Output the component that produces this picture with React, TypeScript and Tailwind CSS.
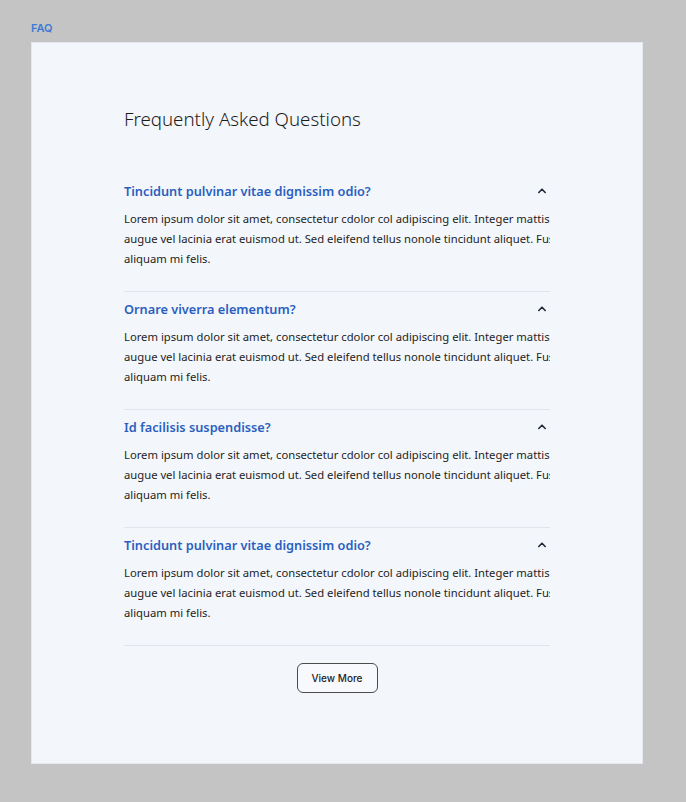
import React from "react";

const items = [
  "Tincidunt pulvinar vitae dignissim odio?",
  "Ornare viverra elementum?",
  "Id facilisis suspendisse?",
  "Tincidunt pulvinar vitae dignissim odio?",
];

function Chevron() {
  return (
    <svg width="10" height="10" viewBox="0 0 10 10" fill="none">
      <path d="M1.8 6.5 L5 3.2 L8.2 6.5" stroke="#1f2937" strokeWidth="1.6" strokeLinecap="round" strokeLinejoin="round" />
    </svg>
  );
}

export default function App() {
  return (
    <div className="min-h-screen w-full bg-[#c4c4c4] pt-[20px] pl-[31px]" style={{ minHeight: 802 }}>
      <div className="h-[22px] text-[11px] leading-[16px] font-semibold text-[#3c7bd6]" style={{ fontFamily: "Inter, 'Noto Sans', sans-serif" }}>
        FAQ
      </div>
      <div
        className="w-[612px] h-[722px] bg-[#f3f6fb] border border-[#e3e7ee] px-[92px] pt-[62px]"
        style={{ fontFamily: "'Noto Sans', sans-serif" }}
      >
        <h1 className="text-[18.7px] leading-[28px] font-light text-[#1c1c1c]">Frequently Asked Questions</h1>
        <div className="mt-[48px] flex flex-col">
          {items.map((q, i) => (
            <div key={i} className={`border-b border-[#e2e6ec] pb-[22px] ${i === 0 ? "" : "pt-[7px]"}`}>
              <div className="flex items-center justify-between h-[20px]">
                <span className="text-[12.75px] leading-[20px] font-semibold text-[#2a5fbf]">{q}</span>
                <span className="mr-[3px] flex items-center"><Chevron /></span>
              </div>
              <div className="mt-[8px] overflow-hidden text-[11.25px] leading-[20px] text-[#1e1e1e]">
                <div className="whitespace-nowrap">Lorem ipsum dolor sit amet, consectetur cdolor col adipiscing elit. Integer mattis</div>
                <div className="whitespace-nowrap">augue vel lacinia erat euismod ut. Sed eleifend tellus nonole tincidunt aliquet. Fusce</div>
                <div className="whitespace-nowrap">aliquam mi felis.</div>
              </div>
            </div>
          ))}
        </div>
        <div className="mt-[17px] flex justify-center">
          <button
            className="w-[81px] h-[30px] rounded-[6px] border border-[#4b4b4b] bg-[#f7f9fc] text-[10px] font-medium text-[#1e1e1e]"
            style={{ fontFamily: "Inter, 'Noto Sans', sans-serif" }}
          >
            View More
          </button>
        </div>
      </div>
    </div>
  );
}
